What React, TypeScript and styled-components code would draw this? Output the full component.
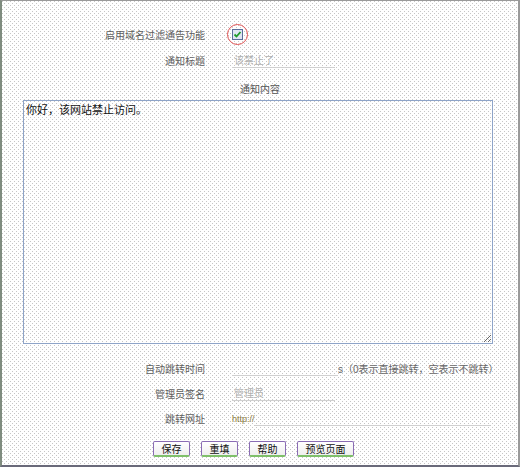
import React from 'react';
import styled, { createGlobalStyle } from 'styled-components';

const GlobalStyle = createGlobalStyle`
  html, body {
    margin: 0;
    padding: 0;
    background: #fff;
  }
  body {
    font-family: "Liberation Sans", "Noto Sans CJK SC", sans-serif;
  }
`;

const Panel = styled.div`
  width: 520px;
  height: 467px;
  box-sizing: border-box;
  border-top: 1px solid #9a9a9a;
  border-left: 2px solid #7f8c7f;
  border-right: 2px solid #9a9a9a;
  border-bottom: 2px solid #6a6a7a;
  background-color: #fff;
  background-image: conic-gradient(at 1px 1px, transparent 270deg, #c6c6c6 270deg),
    conic-gradient(at 1px 1px, transparent 270deg, #c6c6c6 270deg);
  background-size: 4px 4px;
  background-position: 0 0, 2px 2px;
  padding-top: 20px;
  display: flex;
  flex-direction: column;
  font-size: 10px;
  color: #555;
`;

const Row = styled.div<{ h: number }>`
  display: grid;
  grid-template-columns: 203px 1fr;
  column-gap: 27px;
  align-items: center;
  height: ${(p) => p.h}px;
`;

const Label = styled.label`
  text-align: right;
  color: #5e5e5e;
  white-space: nowrap;
`;

const Field = styled.div`
  display: flex;
  align-items: center;
`;

const LineInput = styled.input<{ w: number }>`
  width: ${(p) => p.w}px;
  height: 15px;
  box-sizing: border-box;
  border: none;
  border-bottom: 1px solid #d0d0d0;
  background: transparent;
  padding: 0 2px;
  font-family: inherit;
  font-size: 10px;
  color: #555;
  outline: none;
  &::placeholder {
    color: #b0b0b0;
  }
`;

const Hint = styled.span`
  margin-left: 0;
  color: #666;
  white-space: nowrap;
`;

const Prefix = styled.span`
  color: #8a7a40;
  font-size: 9px;
`;

const CheckRing = styled.span`
  margin-left: -5px;
  width: 21px;
  height: 21px;
  box-sizing: border-box;
  border: 1.5px solid #e05050;
  border-radius: 50%;
  display: flex;
  align-items: center;
  justify-content: center;
`;

const Caption = styled.div`
  height: 26px;
  display: flex;
  align-items: flex-end;
  justify-content: center;
  padding-bottom: 4px;
  box-sizing: border-box;
  color: #555;
`;

const Content = styled.textarea`
  margin: 0 25px 0 21px;
  height: 244px;
  box-sizing: border-box;
  border: 1px solid #8ea4c8;
  background: transparent;
  font-family: "Noto Sans CJK SC", sans-serif;
  font-size: 11px;
  line-height: 14px;
  color: #111;
  padding: 1px 2px;
  resize: both;
  outline: none;
`;

const Spacer = styled.div<{ h: number }>`
  height: ${(p) => p.h}px;
`;

const Buttons = styled.div`
  display: flex;
  gap: 11px;
  padding-left: 151px;
  margin-top: 10px;
`;

const Btn = styled.button<{ w: number }>`
  width: ${(p) => p.w}px;
  height: 16px;
  box-sizing: border-box;
  padding: 0;
  border: 1px solid #8a6cb4;
  border-bottom: 2px solid #7fc06a;
  border-radius: 2px;
  background: linear-gradient(#ffffff, #efefef);
  font-family: "Noto Sans CJK SC", sans-serif;
  font-size: 10px;
  line-height: 12px;
  color: #111;
  cursor: pointer;
`;

const CheckIcon = () => (
  <svg width="11" height="11" viewBox="0 0 11 11">
    <rect x="0.5" y="0.5" width="10" height="10" fill="#dfe6f2" stroke="#5a6e9a" />
    <path d="M2.5 5.5 L4.5 7.5 L8.5 3" fill="none" stroke="#1f9c2a" strokeWidth="1.8" />
  </svg>
);

export default function App() {
  return (
    <>
      <GlobalStyle />
      <Panel>
        <Row h={26}>
          <Label>启用域名过滤通告功能</Label>
          <Field>
            <CheckRing>
              <CheckIcon />
            </CheckRing>
          </Field>
        </Row>
        <Row h={27}>
          <Label>通知标题</Label>
          <Field>
            <LineInput w={103} placeholder="该禁止了" />
          </Field>
        </Row>
        <Caption>通知内容</Caption>
        <Content defaultValue="你好，该网站禁止访问。" />
        <Spacer h={12} />
        <Row h={25}>
          <Label>自动跳转时间</Label>
          <Field>
            <LineInput w={106} />
            <Hint>s（0表示直接跳转，空表示不跳转）</Hint>
          </Field>
        </Row>
        <Row h={25}>
          <Label>管理员签名</Label>
          <Field>
            <LineInput w={103} placeholder="管理员" />
          </Field>
        </Row>
        <Row h={25}>
          <Label>跳转网址</Label>
          <Field>
            <Prefix>http://</Prefix>
            <LineInput w={235} />
          </Field>
        </Row>
        <Buttons>
          <Btn w={37}>保存</Btn>
          <Btn w={37}>重填</Btn>
          <Btn w={37}>帮助</Btn>
          <Btn w={57}>预览页面</Btn>
        </Buttons>
      </Panel>
    </>
  );
}
